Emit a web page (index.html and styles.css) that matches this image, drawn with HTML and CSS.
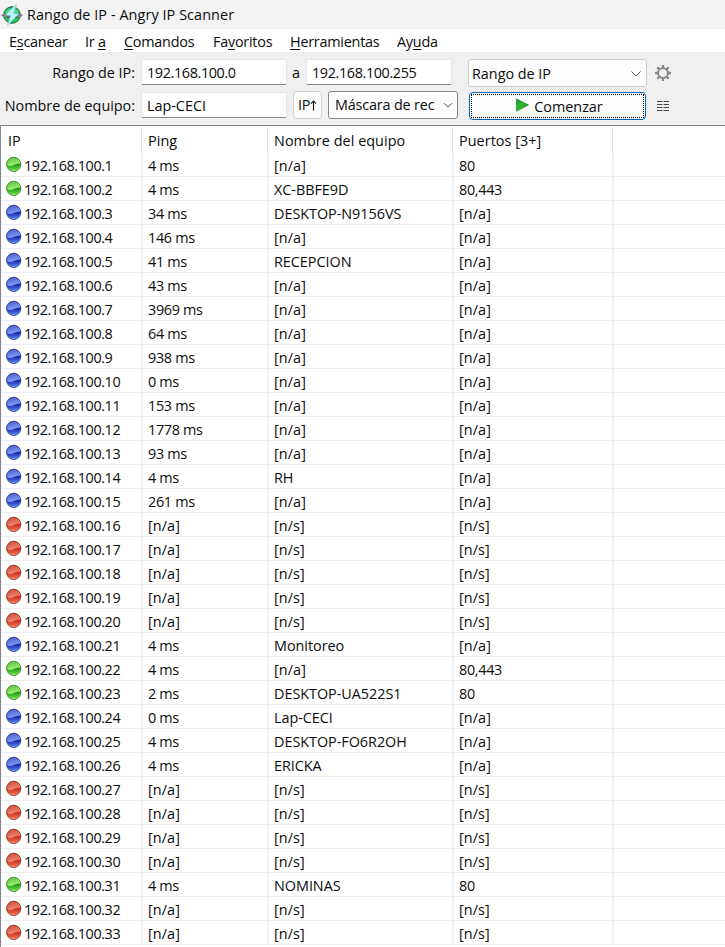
FILE: index.html
```html
<!DOCTYPE html>
<html lang="es">
<head>
<meta charset="utf-8">
<title>Rango de IP - Angry IP Scanner</title>
<link rel="stylesheet" href="styles.css">
</head>
<body>
<svg class="defs" width="0" height="0" aria-hidden="true">
  <defs>
    <linearGradient id="g-up" x1="0" y1="0" x2="0.3" y2="1"><stop offset="0" stop-color="#50b832"/><stop offset=".6" stop-color="#98ea70"/></linearGradient>
    <linearGradient id="g-low" x1="0" y1="0" x2="0" y2="1"><stop offset="0" stop-color="#149010"/><stop offset="1" stop-color="#62dc3c"/></linearGradient>
    <linearGradient id="b-up" x1="0" y1="0" x2="0.3" y2="1"><stop offset="0" stop-color="#3852c4"/><stop offset=".6" stop-color="#8098ee"/></linearGradient>
    <linearGradient id="b-low" x1="0" y1="0" x2="0" y2="1"><stop offset="0" stop-color="#0a1aa4"/><stop offset="1" stop-color="#5070e6"/></linearGradient>
    <linearGradient id="r-up" x1="0" y1="0" x2="0.3" y2="1"><stop offset="0" stop-color="#cc3c2c"/><stop offset=".6" stop-color="#ee8470"/></linearGradient>
    <linearGradient id="r-low" x1="0" y1="0" x2="0" y2="1"><stop offset="0" stop-color="#c42814"/><stop offset="1" stop-color="#f06a50"/></linearGradient>
    <linearGradient id="play" x1="0" y1="0" x2="1" y2="1"><stop offset="0" stop-color="#1c9a24"/><stop offset="0.5" stop-color="#30b830"/><stop offset="1" stop-color="#108418"/></linearGradient>
  </defs>
</svg>
<header class="titlebar">
  <svg class="app-icon" width="22" height="22" viewBox="0 0 22 22">
    <circle cx="11" cy="11" r="8.300" fill="#14c850" stroke="#2a5c48" stroke-width="1"/>
    <path d="M4.500 7.500Q11 1 17.500 7.500L17 9H5z" fill="#50d878"/>
    <path d="M.5 10.500L5 9.200h12l4.500 1.300v1.500l-5 2H6L.5 12z" fill="#748480"/>
    <path d="M6 13.200h10.500" stroke="#333f3c" stroke-width="1"/>
    <path d="M15.500 0L4.500 11l5 .6L6.500 21.500 17.500 10l-5-.6z" fill="#b8f4fc" stroke="#80cce8" stroke-width=".6"/>
  </svg>
  <h1 class="title">Rango de IP - Angry IP Scanner</h1>
</header>
<nav class="menu">
  <span>E<u>s</u>canear</span>
  <span>Ir <u>a</u></span>
  <span><u>C</u>omandos</span>
  <span>Fa<u>v</u>oritos</span>
  <span><u>H</u>erramientas</span>
  <span>Ay<u>u</u>da</span>
</nav>
<section class="toolbar">
  <div class="line line-range">
    <label class="label range-label">Rango de IP:</label>
    <div class="field field-start"><span class="num">192.168.100.0</span></div>
    <span class="to">a</span>
    <div class="field field-end"><span class="num">192.168.100.255</span></div>
    <div class="select select-feeder"><span>Rango de IP</span>
      <svg width="12" height="8" viewBox="0 0 12 8"><path d="M1.500 1.500L6 6l4.500-4.500" fill="none" stroke="#555" stroke-width="1"/></svg>
    </div>
    <svg class="gear" width="18" height="18" viewBox="0 0 18 18">
      <g fill="none" stroke="#858585"><circle cx="9" cy="9" r="4.900" stroke-width="1.900"/>
      <path d="M9 1v3M9 14v3M1 9h3M14 9h3M3.300 3.300l2 2M12.700 12.700l2 2M3.300 14.700l2-2M12.700 5.300l2-2" stroke-width="2.300"/></g>
    </svg>
  </div>
  <div class="line line-host">
    <label class="label host-label">Nombre de equipo:</label>
    <div class="field field-start"><span>Lap-CECI</span></div>
    <div class="ip-up">IP<svg width="7" height="11" viewBox="0 0 7 11"><path d="M3.500 10.500V1M1 3.700L3.500 1 6 3.700" fill="none" stroke="#111" stroke-width="1.100"/></svg></div>
    <div class="select select-mask"><span>Máscara de rec</span>
      <svg width="10" height="7" viewBox="0 0 10 7"><path d="M1 1.200L5 5.200l4-4" fill="none" stroke="#555" stroke-width="1"/></svg>
    </div>
    <div class="start"><div class="start-focus">
      <svg width="13" height="14" viewBox="0 0 13 14"><path d="M.5.800L12.500 7 .5 13.200z" fill="url(#play)" stroke="#14801c" stroke-width=".6"/></svg>
      <span>Comenzar</span></div></div>
    <svg class="columns-icon" width="12" height="11" viewBox="0 0 12 11"><path d="M0 .5h5.500M6.500 .5H12M0 3.500h5.500M6.500 3.500H12M0 6.500h5.500M6.500 6.500H12M0 9.500h5.500M6.500 9.500H12" stroke="#444" stroke-width="1"/></svg>
  </div>
</section>
<main class="list">
  <div class="row head"><div>IP</div><div>Ping</div><div>Nombre del equipo</div><div>Puertos [3+]</div><div></div></div>
  <div id="rows"></div>
</main>
<script src="rows.js"></script>
</body>
</html>
```
FILE: styles.css
```css
* { box-sizing: border-box; }
body {
  margin: 0;
  width: 725px;
  height: 947px;
  overflow: hidden;
  background: #f0f0f0;
  color: #0c0c0c;
  font: 14.4px/20px "Open Sans", "Noto Sans", sans-serif;
  letter-spacing: -0.02px;
}
.defs { position: absolute; }
svg { display: block; flex: none; }
.titlebar {
  display: flex;
  align-items: center;
  gap: 4px;
  height: 29px;
  padding-left: 1px;
  background: #f3f3f3;
}
.title { margin: 0; padding-top: 1px; font-size: 14.4px; font-weight: 400; letter-spacing: 0.08px; white-space: nowrap; }
.menu {
  display: grid;
  grid-template-columns: 76px 39px 89px 77px 107px auto;
  height: 23px;
  padding-left: 9px;
  background: #fff;
  align-items: center;
  padding-top: 3px;
  white-space: nowrap;
  letter-spacing: -0.24px;
}
.menu u { text-underline-offset: 2px; text-decoration-thickness: 1px; }
.toolbar { height: 73px; }
.line { display: flex; white-space: nowrap; }
.line-range { height: 39px; padding-top: 7px; align-items: flex-start; }
.line-host { height: 34px; align-items: flex-start; }
.label { width: 135px; margin-right: 6px; text-align: right; }
.range-label { padding-top: 4px; }
.host-label { padding-top: 5px; }
.field {
  height: 26px;
  padding: 3px 0 0 5px;
  border: 1px solid #e6e6e6;
  border-bottom-color: #858585;
  border-radius: 2px;
  background: #fff;
}
.field-start { width: 146px; }
.line-host .field { margin-top: 1px; }
.to { width: 19px; padding: 4px 0 0 5px; }
.field-end { width: 146px; }
.num { letter-spacing: -0.38px; }
.select {
  display: flex;
  align-items: center;
  justify-content: space-between;
  height: 28px;
  background: #fdfdfd;
  border: 1px solid #ccc;
  border-radius: 3px;
}
.select-feeder { width: 179px; margin-left: 16px; padding: 1px 4px 0 3px; }
.gear { margin: 5px 0 0 7px; }
.ip-up {
  display: flex;
  align-items: center;
  justify-content: center;
  width: 29px;
  height: 28px;
  margin-left: 6px;
  border: 1px solid #d0d0d0;
  border-radius: 4px;
  background: #fdfdfd;
  letter-spacing: -0.3px;
}
.select-mask { width: 130px; margin-left: 6px; padding: 0 4px 0 6px; border-color: #868686; letter-spacing: -0.17px; }
.start {
  width: 177px;
  height: 28px;
  margin: 1px 0 0 11px;
  padding: 1px;
  border: 1px solid #0067c0;
  border-radius: 4px;
  background: #fdfdfd;
}
.start-focus {
  display: flex;
  align-items: center;
  justify-content: center;
  gap: 5px;
  height: 24px;
  padding-left: 4px;
  border: 1px dotted #000;
}
.start-focus svg { margin-top: -2px; }
.start-focus span { padding-top: 1px; }
.columns-icon { margin: 10px 0 0 11px; }
.list {
  height: 822px;
  overflow: hidden;
  border: 1px solid #828790;
  border-width: 1px 0 0 1px;
  background: #fff;
}
.row {
  display: grid;
  grid-template-columns: 142px 126px 185px 160px 1fr;
  height: 24px;
  white-space: nowrap;
}
.row > div { padding: 3px 0 0 5px; border-right: 2px solid #edf2fa; border-bottom: 1px solid #ededed; }
.row > div:last-child { border-right: 0; }
.row > .ip { display: flex; padding-left: 5px; gap: 2px; letter-spacing: -0.4px; }
.row > .ping, .row > .port { letter-spacing: -0.32px; }
.row > .name { letter-spacing: -0.03px; }
.row > .na { letter-spacing: 0.1px; }
.row.head { height: 27px; padding-top: 2px; }
.row.head > div { padding-top: 3px; border-bottom: 0; border-right: 1px solid #e4e4e4; margin-right: 1px; letter-spacing: 0.05px; }
.row.head > div:first-child { padding-left: 7px; }
.row.head > div:last-child { border-right: 0; }
```
FILE: rows.js
```js
const NA = "[n/a]", NS = "[n/s]";
// host number -> [ping, host name, ports]
const alive = {
  1: ["4 ms", NA, "80"], 2: ["4 ms", "XC-BBFE9D", "80,443"], 3: ["34 ms", "DESKTOP-N9156VS", NA],
  4: ["146 ms", NA, NA], 5: ["41 ms", "RECEPCION", NA], 6: ["43 ms", NA, NA],
  7: ["3969 ms", NA, NA], 8: ["64 ms", NA, NA], 9: ["938 ms", NA, NA], 10: ["0 ms", NA, NA],
  11: ["153 ms", NA, NA], 12: ["1778 ms", NA, NA], 13: ["93 ms", NA, NA], 14: ["4 ms", "RH", NA],
  15: ["261 ms", NA, NA], 21: ["4 ms", "Monitoreo", NA], 22: ["4 ms", NA, "80,443"],
  23: ["2 ms", "DESKTOP-UA522S1", "80"], 24: ["0 ms", "Lap-CECI", NA],
  25: ["4 ms", "DESKTOP-FO6R2OH", NA], 26: ["4 ms", "ERICKA", NA], 31: ["4 ms", "NOMINAS", "80"]
};
const edge = { g: "#3c8a2c", b: "#2c3c94", r: "#94382c" };
const ball = c => `<svg width="16" height="16" viewBox="0 0 16 16">
  <circle cx="7.700" cy="8.400" r="7.300" fill="url(#${c}-up)"/>
  <path d="M.6 8.700Q2.500 10.300 5 9.900T9.500 8.300T14.900 7.600A7.300 7.300 0 0 1 .6 8.700z" fill="url(#${c}-low)"/>
  <circle cx="7.700" cy="8.400" r="7.100" fill="none" stroke="${edge[c]}" stroke-width=".9"/></svg>`;
const cell = (name, text) => `<div class="${name}${text[0] === "[" ? " na" : ""}">${text}</div>`;
let html = "";
for (let i = 1; i <= 33; i++) {
  const [ping, name, ports] = alive[i] || [NA, NS, NS];
  const c = !alive[i] ? "r" : ports === NA ? "b" : "g";
  html += `<div class="row"><div class="ip">${ball(c)}<span>192.168.100.${i}</span></div>${cell("ping", ping)}${cell("name", name)}${cell("port", ports)}<div></div></div>`;
}
document.getElementById("rows").innerHTML = html;
```
